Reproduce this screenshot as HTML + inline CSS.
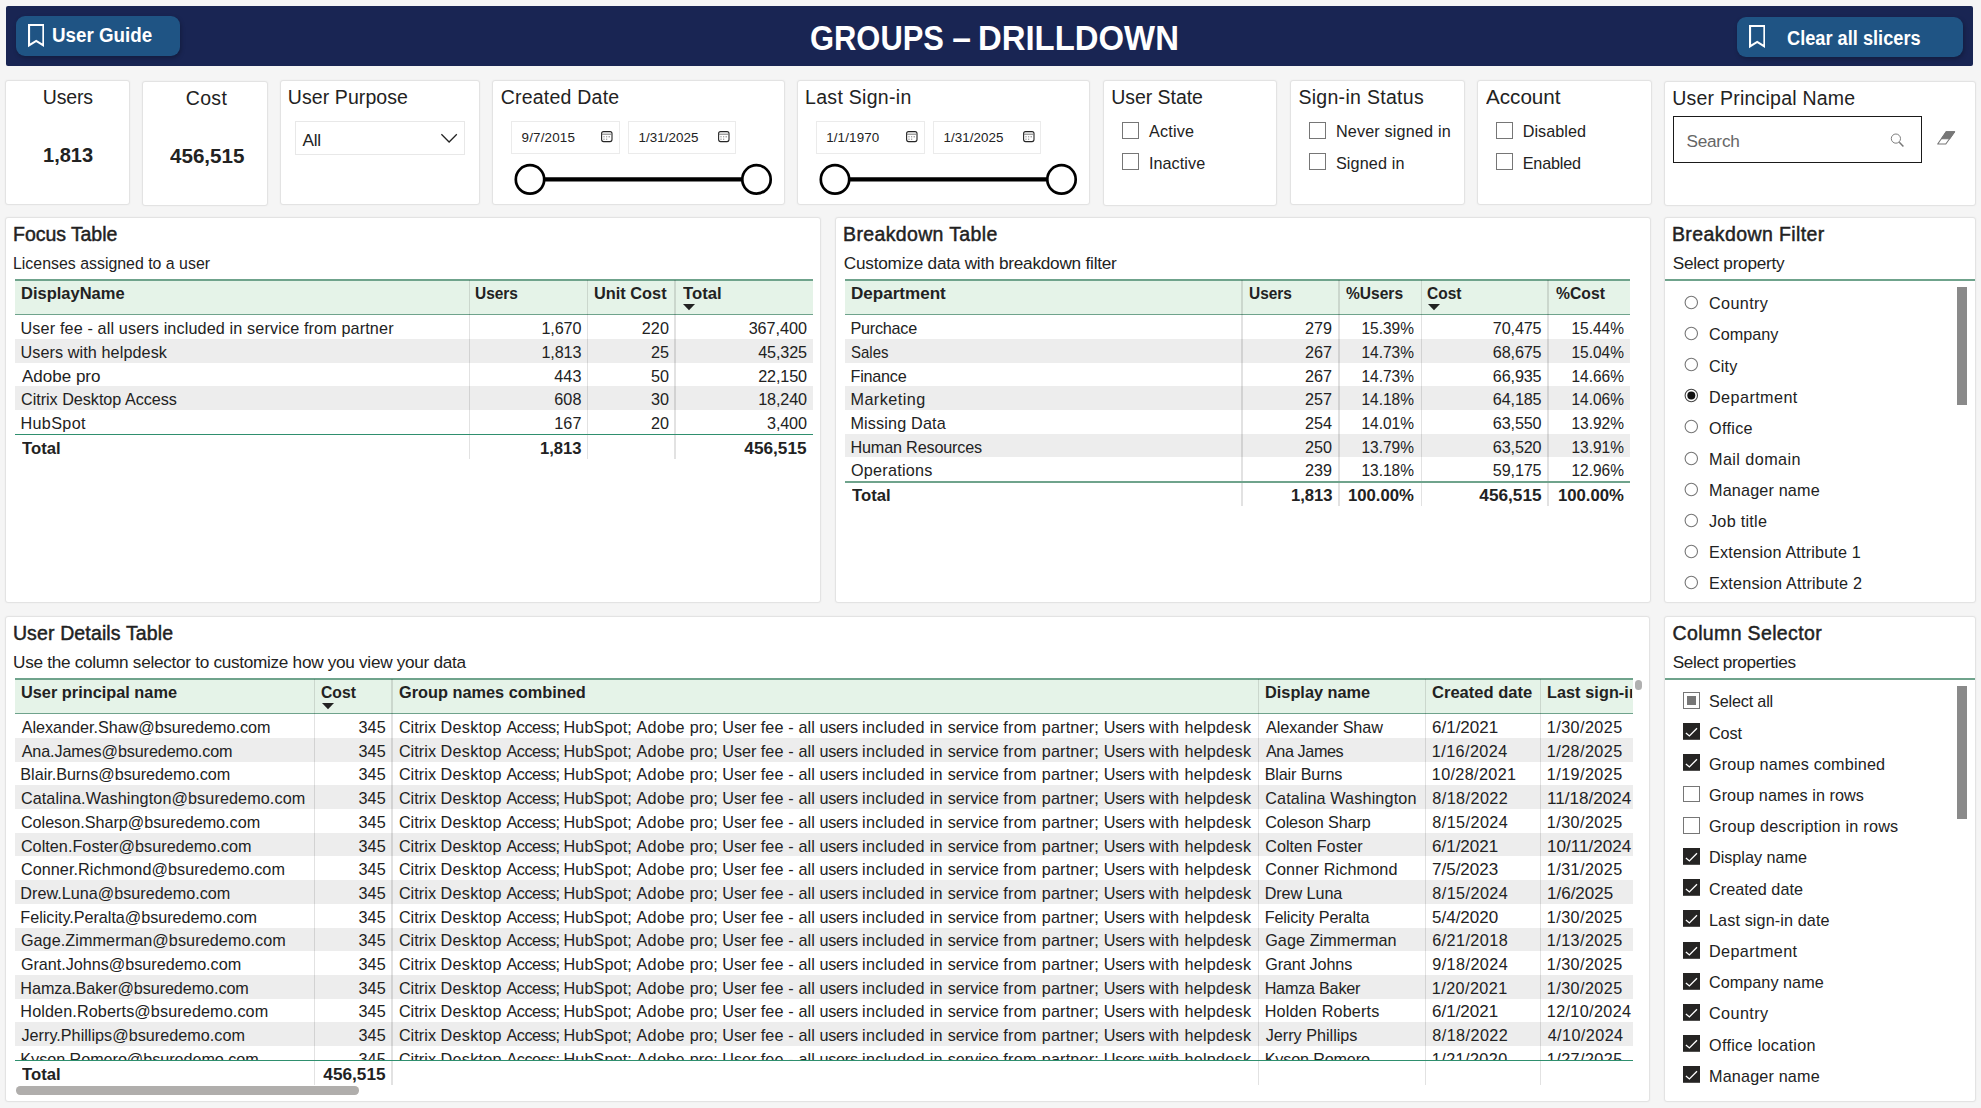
<!DOCTYPE html>
<html lang="en"><head><meta charset="utf-8"><title>Groups – Drilldown</title>
<style>
html,body{margin:0;padding:0}
body{width:1981px;height:1108px;overflow:hidden;background:#f5f5f5;position:relative;font-family:"Liberation Sans", Arial, sans-serif;color:#222}
body>div,body>svg{position:absolute;box-sizing:content-box}
body>span{position:absolute;white-space:pre;line-height:1;display:block}
div>div{position:absolute}
</style></head><body>
<div style="left:6px;top:6px;width:1967px;height:60px;background:#192553;border-radius:2px"></div>
<div style="left:16.3px;top:16px;width:164px;height:40px;background:#1f5484;border-radius:9px;box-shadow:1px 2px 4px rgba(0,0,0,.25)"></div>
<div style="left:1737px;top:17.3px;width:226.3px;height:39.5px;background:#1f5484;border-radius:9px;box-shadow:1px 2px 4px rgba(0,0,0,.25)"></div>
<svg style="left:27.8px;top:24.2px" width="16.5" height="24.5" viewBox="0 0 16.5 24.5"><path d="M1.05 1.05 H15.4 V21.4 L8.2 16.9 L1.05 21.4 Z" fill="none" stroke="#fff" stroke-width="2.1" stroke-linejoin="miter"/></svg>
<svg style="left:1748.9px;top:25.1px" width="16.5" height="24.5" viewBox="0 0 16.5 24.5"><path d="M1.05 1.05 H15.4 V21.4 L8.2 16.9 L1.05 21.4 Z" fill="none" stroke="#fff" stroke-width="2.1" stroke-linejoin="miter"/></svg>
<span style="left:51.87px;top:26px;font-size:19.5px;font-weight:700;transform-origin:0 0;transform:scaleX(0.9627);color:#fff;">User Guide</span>
<span style="left:1787.25px;top:29px;font-size:19.5px;font-weight:700;transform-origin:0 0;transform:scaleX(0.934);color:#fff;">Clear all slicers</span>
<span style="left:0;top:21px;font-size:35.4px;font-weight:700;color:#fff"><span style="position:absolute;left:809.9px;top:0;transform-origin:0 0;transform:scaleX(.8735)">GROUPS</span><span style="position:absolute;left:943.2px;top:0;transform-origin:0 0;transform:scaleX(.95)"> – </span><span style="position:absolute;left:977.9px;top:0;transform-origin:0 0;transform:scaleX(.929)">DRILLDOWN</span></span>
<div style="left:5px;top:80px;width:122.80000000000001px;height:122.5px;background:#fff;border:1px solid #e3e3e3;border-radius:3px;box-shadow:0 0 2px rgba(0,0,0,.05)"></div>
<div style="left:142px;top:81px;width:124px;height:123px;background:#fff;border:1px solid #e3e3e3;border-radius:3px;box-shadow:0 0 2px rgba(0,0,0,.05)"></div>
<div style="left:280px;top:80px;width:198px;height:123px;background:#fff;border:1px solid #e3e3e3;border-radius:3px;box-shadow:0 0 2px rgba(0,0,0,.05)"></div>
<div style="left:492px;top:80px;width:291px;height:123px;background:#fff;border:1px solid #e3e3e3;border-radius:3px;box-shadow:0 0 2px rgba(0,0,0,.05)"></div>
<div style="left:797px;top:80px;width:291px;height:123px;background:#fff;border:1px solid #e3e3e3;border-radius:3px;box-shadow:0 0 2px rgba(0,0,0,.05)"></div>
<div style="left:1103px;top:80px;width:172px;height:124px;background:#fff;border:1px solid #e3e3e3;border-radius:3px;box-shadow:0 0 2px rgba(0,0,0,.05)"></div>
<div style="left:1290px;top:80px;width:173px;height:123px;background:#fff;border:1px solid #e3e3e3;border-radius:3px;box-shadow:0 0 2px rgba(0,0,0,.05)"></div>
<div style="left:1477px;top:80px;width:173px;height:123px;background:#fff;border:1px solid #e3e3e3;border-radius:3px;box-shadow:0 0 2px rgba(0,0,0,.05)"></div>
<div style="left:1664px;top:81px;width:310px;height:123px;background:#fff;border:1px solid #e3e3e3;border-radius:3px;box-shadow:0 0 2px rgba(0,0,0,.05)"></div>
<span style="left:42.8px;top:88px;font-size:19.5px;letter-spacing:-0.188px;">Users</span>
<span style="left:43.04px;top:146px;font-size:19.5px;font-weight:700;transform-origin:0 0;transform:scaleX(1.0278);">1,813</span>
<span style="left:185.71px;top:89px;font-size:19.5px;letter-spacing:0.354px;">Cost</span>
<span style="left:169.69px;top:147px;font-size:19.5px;font-weight:700;transform-origin:0 0;transform:scaleX(1.0563);">456,515</span>
<span style="left:287.8px;top:88px;font-size:19.5px;letter-spacing:0.086px;">User Purpose</span>
<span style="left:500.71px;top:88px;font-size:19.5px;letter-spacing:0.226px;">Created Date</span>
<span style="left:805.1px;top:88px;font-size:19.5px;letter-spacing:0.29px;">Last Sign-in</span>
<span style="left:1111.2px;top:88px;font-size:19.5px;letter-spacing:-0.039px;">User State</span>
<span style="left:1298.41px;top:88px;font-size:19.5px;letter-spacing:0.297px;">Sign-in Status</span>
<span style="left:1485.96px;top:88px;font-size:19.5px;transform-origin:0 0;transform:scaleX(1.0582);">Account</span>
<span style="left:1672.2px;top:89px;font-size:19.5px;letter-spacing:0.231px;">User Principal Name</span>
<div style="left:294.5px;top:120.8px;width:168px;height:32px;border:1px solid #e8e8e8;background:#fff"></div>
<span style="left:302.57px;top:132px;font-size:17.2px;letter-spacing:-0.289px;">All</span>
<svg style="left:440px;top:133px" width="19" height="12" viewBox="0 0 19 12"><path d="M1.4 1.3 L9.1 9 L16.8 1.3" fill="none" stroke="#222" stroke-width="1.25"/></svg>
<div style="left:510.8px;top:121.3px;width:107px;height:30.6px;border:1px solid #ebebeb;background:#fff"></div>
<div style="left:628.2px;top:121.3px;width:105.5px;height:30.6px;border:1px solid #ebebeb;background:#fff"></div>
<span style="left:521.57px;top:131px;font-size:13.4px;letter-spacing:0.168px;">9/7/2015</span>
<span style="left:638.58px;top:131px;font-size:13.4px;letter-spacing:0.028px;">1/31/2025</span>
<svg style="left:600.8px;top:131px" width="12" height="12" viewBox="0 0 12 12"><rect x="0.6" y="0.6" width="10.4" height="10" rx="2" fill="none" stroke="#262626" stroke-width="1.1"/><path d="M0.8 3.2 H10.8" stroke="#777" stroke-width="1"/><path d="M2.5 5.8h1M5.2 5.8h1M7.6 5.8h1.2M2.5 8.2h1M5.2 8.2h1" stroke="#555" stroke-width="0.9"/></svg>
<svg style="left:717.5px;top:131px" width="12" height="12" viewBox="0 0 12 12"><rect x="0.6" y="0.6" width="10.4" height="10" rx="2" fill="none" stroke="#262626" stroke-width="1.1"/><path d="M0.8 3.2 H10.8" stroke="#777" stroke-width="1"/><path d="M2.5 5.8h1M5.2 5.8h1M7.6 5.8h1.2M2.5 8.2h1M5.2 8.2h1" stroke="#555" stroke-width="0.9"/></svg>
<svg style="left:511px;top:162px" width="266" height="36" viewBox="0 0 266 36"><path d="M19 17.4 H245.5" stroke="#000" stroke-width="4.3"/><circle cx="19" cy="17.4" r="14.2" fill="#fff" stroke="#000" stroke-width="2.7"/><circle cx="245.5" cy="17.4" r="14.2" fill="#fff" stroke="#000" stroke-width="2.7"/></svg>
<div style="left:815.8px;top:121.3px;width:107px;height:30.6px;border:1px solid #ebebeb;background:#fff"></div>
<div style="left:933.2px;top:121.3px;width:105.5px;height:30.6px;border:1px solid #ebebeb;background:#fff"></div>
<span style="left:826.18px;top:131px;font-size:13.4px;letter-spacing:0.14px;">1/1/1970</span>
<span style="left:943.58px;top:131px;font-size:13.4px;letter-spacing:0.028px;">1/31/2025</span>
<svg style="left:905.8px;top:131px" width="12" height="12" viewBox="0 0 12 12"><rect x="0.6" y="0.6" width="10.4" height="10" rx="2" fill="none" stroke="#262626" stroke-width="1.1"/><path d="M0.8 3.2 H10.8" stroke="#777" stroke-width="1"/><path d="M2.5 5.8h1M5.2 5.8h1M7.6 5.8h1.2M2.5 8.2h1M5.2 8.2h1" stroke="#555" stroke-width="0.9"/></svg>
<svg style="left:1022.5px;top:131px" width="12" height="12" viewBox="0 0 12 12"><rect x="0.6" y="0.6" width="10.4" height="10" rx="2" fill="none" stroke="#262626" stroke-width="1.1"/><path d="M0.8 3.2 H10.8" stroke="#777" stroke-width="1"/><path d="M2.5 5.8h1M5.2 5.8h1M7.6 5.8h1.2M2.5 8.2h1M5.2 8.2h1" stroke="#555" stroke-width="0.9"/></svg>
<svg style="left:816px;top:162px" width="266" height="36" viewBox="0 0 266 36"><path d="M19 17.4 H245.5" stroke="#000" stroke-width="4.3"/><circle cx="19" cy="17.4" r="14.2" fill="#fff" stroke="#000" stroke-width="2.7"/><circle cx="245.5" cy="17.4" r="14.2" fill="#fff" stroke="#000" stroke-width="2.7"/></svg>
<div style="left:1121.7px;top:122px;width:15.2px;height:15.2px;border:1px solid #767676;background:#fff"></div>
<span style="left:1148.9px;top:123px;font-size:16.2px;letter-spacing:0.216px;">Active</span>
<div style="left:1121.7px;top:153px;width:15.2px;height:15.2px;border:1px solid #767676;background:#fff"></div>
<span style="left:1148.9px;top:155px;font-size:16.2px;letter-spacing:0.068px;">Inactive</span>
<div style="left:1308.7px;top:122px;width:15.2px;height:15.2px;border:1px solid #767676;background:#fff"></div>
<span style="left:1335.9px;top:123px;font-size:16.2px;letter-spacing:0.163px;">Never signed in</span>
<div style="left:1308.7px;top:153px;width:15.2px;height:15.2px;border:1px solid #767676;background:#fff"></div>
<span style="left:1335.9px;top:155px;font-size:16.2px;letter-spacing:0.145px;">Signed in</span>
<div style="left:1495.5px;top:122px;width:15.2px;height:15.2px;border:1px solid #767676;background:#fff"></div>
<span style="left:1522.7px;top:123px;font-size:16.2px;letter-spacing:0.053px;">Disabled</span>
<div style="left:1495.5px;top:153px;width:15.2px;height:15.2px;border:1px solid #767676;background:#fff"></div>
<span style="left:1522.7px;top:155px;font-size:16.2px;letter-spacing:-0.175px;">Enabled</span>
<div style="left:1672.8px;top:116px;width:247px;height:45px;border:1.3px solid #1a1a1a;background:#fff"></div>
<span style="left:1686.42px;top:133px;font-size:17.2px;letter-spacing:-0.207px;color:#666;">Search</span>
<svg style="left:1889px;top:132px" width="17" height="17" viewBox="0 0 17 17"><circle cx="6.9" cy="6.6" r="4.6" fill="none" stroke="#767676" stroke-width="0.95"/><path d="M10.3 10.2 L14.4 14.4" stroke="#767676" stroke-width="1.5"/></svg>
<svg style="left:1936px;top:130px" width="21" height="16" viewBox="0 0 21 16"><path d="M10.2 1.8 H18.6 L9.8 14 H1.7 Z" fill="#fff" stroke="#777" stroke-width="1.1" stroke-linejoin="round"/><path d="M10.2 1.8 H18.6 L13.6 8.7 H5.6 Z" fill="#777" stroke="#777" stroke-width="1.1" stroke-linejoin="round"/></svg>
<div style="left:5px;top:217px;width:814.2px;height:383.79999999999995px;background:#fff;border:1px solid #e3e3e3;border-radius:3px;box-shadow:0 0 2px rgba(0,0,0,.05)"></div>
<span style="left:13.1px;top:225px;font-size:19.5px;letter-spacing:-0.063px;-webkit-text-stroke:0.45px #222;">Focus Table</span>
<span style="left:13.4px;top:255px;font-size:17.2px;transform-origin:0 0;transform:scaleX(0.9247);">Licenses assigned to a user</span>
<div style="left:15px;top:279px;width:798px;height:36px;background:#e5f3e8"></div>
<div style="left:15px;top:279px;width:798px;height:2px;background:#6fa38c"></div>
<div style="left:15px;top:314px;width:798px;height:1px;background:#6fa38c"></div>
<div style="left:15px;top:339.0px;width:798px;height:23.7px;background:#ededed"></div>
<div style="left:15px;top:386.4px;width:798px;height:23.7px;background:#ededed"></div>
<div style="left:468.65px;top:280px;width:1.3px;height:178.5px;background:rgba(0,0,0,.115)"></div>
<div style="left:586.75px;top:280px;width:1.3px;height:178.5px;background:rgba(0,0,0,.115)"></div>
<div style="left:674.35px;top:280px;width:1.3px;height:178.5px;background:rgba(0,0,0,.115)"></div>
<span style="left:20.7px;top:285px;font-size:16.2px;font-weight:700;transform-origin:0 0;transform:scaleX(1.0187);">DisplayName</span>
<span style="left:475.37px;top:285px;font-size:16.2px;font-weight:700;transform-origin:0 0;transform:scaleX(0.9549);">Users</span>
<span style="left:594.42px;top:285px;font-size:16.2px;font-weight:700;transform-origin:0 0;transform:scaleX(1.0088);">Unit Cost</span>
<span style="left:682.81px;top:285px;font-size:16.2px;font-weight:700;transform-origin:0 0;transform:scaleX(1.0321);">Total</span>
<svg style="left:683.0px;top:304px" width="12" height="7" viewBox="0 0 12 7"><path d="M0 0 H12 L6 6.3 Z" fill="#222"/></svg>
<span style="left:20.55px;top:320px;font-size:16.2px;letter-spacing:0.131px;">User fee - all users included in service from partner</span>
<span style="left:541.43px;top:320px;font-size:16.2px;letter-spacing:-0.136px;">1,670</span>
<span style="left:641.78px;top:320px;font-size:16.2px;letter-spacing:0.1px;">220</span>
<span style="left:748.63px;top:320px;font-size:16.2px;letter-spacing:-0.024px;">367,400</span>
<span style="left:20.55px;top:344px;font-size:16.2px;letter-spacing:0.084px;">Users with helpdesk</span>
<span style="left:541.43px;top:344px;font-size:16.2px;letter-spacing:-0.136px;">1,813</span>
<span style="left:650.88px;top:344px;font-size:16.2px;letter-spacing:0.1px;">25</span>
<span style="left:758.23px;top:344px;font-size:16.2px;letter-spacing:-0.149px;">45,325</span>
<span style="left:21.77px;top:368px;font-size:16.2px;transform-origin:0 0;transform:scaleX(1.0505);">Adobe pro</span>
<span style="left:554.18px;top:368px;font-size:16.2px;letter-spacing:0.1px;">443</span>
<span style="left:650.88px;top:368px;font-size:16.2px;letter-spacing:0.1px;">50</span>
<span style="left:758.23px;top:368px;font-size:16.2px;letter-spacing:-0.149px;">22,150</span>
<span style="left:20.98px;top:391px;font-size:16.2px;letter-spacing:-0.028px;">Citrix Desktop Access</span>
<span style="left:554.18px;top:391px;font-size:16.2px;letter-spacing:0.1px;">608</span>
<span style="left:650.88px;top:391px;font-size:16.2px;letter-spacing:0.1px;">30</span>
<span style="left:758.23px;top:391px;font-size:16.2px;letter-spacing:-0.149px;">18,240</span>
<span style="left:20.47px;top:415px;font-size:16.2px;letter-spacing:0.345px;">HubSpot</span>
<span style="left:554.18px;top:415px;font-size:16.2px;letter-spacing:0.1px;">167</span>
<span style="left:650.88px;top:415px;font-size:16.2px;letter-spacing:0.1px;">20</span>
<span style="left:767.03px;top:415px;font-size:16.2px;letter-spacing:-0.136px;">3,400</span>
<div style="left:15px;top:433.8px;width:798px;height:1.4px;background:#2f8f6e"></div>
<span style="left:21.61px;top:440px;font-size:16.2px;font-weight:700;transform-origin:0 0;transform:scaleX(1.0321);">Total</span>
<span style="left:540.88px;top:440px;font-size:16.2px;font-weight:700;transform-origin:100% 0;transform:scaleX(1.0261);">1,813</span>
<span style="left:748.48px;top:440px;font-size:16.2px;font-weight:700;transform-origin:100% 0;transform:scaleX(1.0625);">456,515</span>
<div style="left:835.3px;top:217px;width:814.0px;height:383.79999999999995px;background:#fff;border:1px solid #e3e3e3;border-radius:3px;box-shadow:0 0 2px rgba(0,0,0,.05)"></div>
<span style="left:843.1px;top:225px;font-size:19.5px;letter-spacing:0.351px;-webkit-text-stroke:0.45px #222;">Breakdown Table</span>
<span style="left:843.83px;top:255px;font-size:17.2px;letter-spacing:-0.224px;">Customize data with breakdown filter</span>
<div style="left:845px;top:279px;width:785px;height:36px;background:#e5f3e8"></div>
<div style="left:845px;top:279px;width:785px;height:2px;background:#6fa38c"></div>
<div style="left:845px;top:314px;width:785px;height:1px;background:#6fa38c"></div>
<div style="left:845px;top:339.0px;width:785px;height:23.7px;background:#ededed"></div>
<div style="left:845px;top:386.4px;width:785px;height:23.7px;background:#ededed"></div>
<div style="left:845px;top:433.8px;width:785px;height:23.7px;background:#ededed"></div>
<div style="left:1241.35px;top:280px;width:1.3px;height:225.9px;background:rgba(0,0,0,.115)"></div>
<div style="left:1338.35px;top:280px;width:1.3px;height:225.9px;background:rgba(0,0,0,.115)"></div>
<div style="left:1420.55px;top:280px;width:1.3px;height:225.9px;background:rgba(0,0,0,.115)"></div>
<div style="left:1547.45px;top:280px;width:1.3px;height:225.9px;background:rgba(0,0,0,.115)"></div>
<span style="left:850.66px;top:285px;font-size:16.2px;font-weight:700;transform-origin:0 0;transform:scaleX(1.0536);">Department</span>
<span style="left:1249.07px;top:285px;font-size:16.2px;font-weight:700;transform-origin:0 0;transform:scaleX(0.9549);">Users</span>
<span style="left:1345.51px;top:285px;font-size:16.2px;font-weight:700;transform-origin:0 0;transform:scaleX(0.9607);">%Users</span>
<span style="left:1427.36px;top:285px;font-size:16.2px;font-weight:700;transform-origin:0 0;transform:scaleX(0.958);">Cost</span>
<span style="left:1555.61px;top:285px;font-size:16.2px;font-weight:700;transform-origin:0 0;transform:scaleX(0.9702);">%Cost</span>
<svg style="left:1428.0px;top:304px" width="12" height="7" viewBox="0 0 12 7"><path d="M0 0 H12 L6 6.3 Z" fill="#222"/></svg>
<span style="left:850.47px;top:320px;font-size:16.2px;letter-spacing:-0.231px;">Purchace</span>
<span style="left:1304.88px;top:320px;font-size:16.2px;letter-spacing:0.1px;">279</span>
<span style="left:1359.39px;top:320px;font-size:16.2px;transform-origin:100% 0;transform:scaleX(0.9557);">15.39%</span>
<span style="left:1492.83px;top:320px;font-size:16.2px;letter-spacing:-0.149px;">70,475</span>
<span style="left:1569.09px;top:320px;font-size:16.2px;transform-origin:100% 0;transform:scaleX(0.9557);">15.44%</span>
<span style="left:851.12px;top:344px;font-size:16.2px;transform-origin:0 0;transform:scaleX(0.9252);">Sales</span>
<span style="left:1304.88px;top:344px;font-size:16.2px;letter-spacing:0.1px;">267</span>
<span style="left:1359.39px;top:344px;font-size:16.2px;transform-origin:100% 0;transform:scaleX(0.9557);">14.73%</span>
<span style="left:1492.83px;top:344px;font-size:16.2px;letter-spacing:-0.149px;">68,675</span>
<span style="left:1569.09px;top:344px;font-size:16.2px;transform-origin:100% 0;transform:scaleX(0.9557);">15.04%</span>
<span style="left:850.47px;top:368px;font-size:16.2px;letter-spacing:-0.22px;">Finance</span>
<span style="left:1304.88px;top:368px;font-size:16.2px;letter-spacing:0.1px;">267</span>
<span style="left:1359.39px;top:368px;font-size:16.2px;transform-origin:100% 0;transform:scaleX(0.9557);">14.73%</span>
<span style="left:1492.83px;top:368px;font-size:16.2px;letter-spacing:-0.149px;">66,935</span>
<span style="left:1569.09px;top:368px;font-size:16.2px;transform-origin:100% 0;transform:scaleX(0.9557);">14.66%</span>
<span style="left:850.47px;top:391px;font-size:16.2px;letter-spacing:0.449px;">Marketing</span>
<span style="left:1304.88px;top:391px;font-size:16.2px;letter-spacing:0.1px;">257</span>
<span style="left:1359.39px;top:391px;font-size:16.2px;transform-origin:100% 0;transform:scaleX(0.9557);">14.18%</span>
<span style="left:1492.83px;top:391px;font-size:16.2px;letter-spacing:-0.149px;">64,185</span>
<span style="left:1569.09px;top:391px;font-size:16.2px;transform-origin:100% 0;transform:scaleX(0.9557);">14.06%</span>
<span style="left:850.47px;top:415px;font-size:16.2px;letter-spacing:0.155px;">Missing Data</span>
<span style="left:1304.88px;top:415px;font-size:16.2px;letter-spacing:0.1px;">254</span>
<span style="left:1359.39px;top:415px;font-size:16.2px;transform-origin:100% 0;transform:scaleX(0.9557);">14.01%</span>
<span style="left:1492.83px;top:415px;font-size:16.2px;letter-spacing:-0.149px;">63,550</span>
<span style="left:1569.09px;top:415px;font-size:16.2px;transform-origin:100% 0;transform:scaleX(0.9557);">13.92%</span>
<span style="left:850.47px;top:439px;font-size:16.2px;letter-spacing:-0.171px;">Human Resources</span>
<span style="left:1304.88px;top:439px;font-size:16.2px;letter-spacing:0.1px;">250</span>
<span style="left:1359.39px;top:439px;font-size:16.2px;transform-origin:100% 0;transform:scaleX(0.9557);">13.79%</span>
<span style="left:1492.83px;top:439px;font-size:16.2px;letter-spacing:-0.149px;">63,520</span>
<span style="left:1569.09px;top:439px;font-size:16.2px;transform-origin:100% 0;transform:scaleX(0.9557);">13.91%</span>
<span style="left:851.03px;top:462px;font-size:16.2px;letter-spacing:0.243px;">Operations</span>
<span style="left:1304.88px;top:462px;font-size:16.2px;letter-spacing:0.1px;">239</span>
<span style="left:1359.39px;top:462px;font-size:16.2px;transform-origin:100% 0;transform:scaleX(0.9557);">13.18%</span>
<span style="left:1492.83px;top:462px;font-size:16.2px;letter-spacing:-0.149px;">59,175</span>
<span style="left:1569.09px;top:462px;font-size:16.2px;transform-origin:100% 0;transform:scaleX(0.9557);">12.96%</span>
<div style="left:845px;top:481.20000000000005px;width:785px;height:2px;background:#6fa38c"></div>
<span style="left:851.61px;top:487px;font-size:16.2px;font-weight:700;transform-origin:0 0;transform:scaleX(1.0321);">Total</span>
<span style="left:1291.58px;top:487px;font-size:16.2px;font-weight:700;transform-origin:100% 0;transform:scaleX(1.0261);">1,813</span>
<span style="left:1350.39px;top:487px;font-size:16.2px;font-weight:700;transform-origin:100% 0;transform:scaleX(1.0323);">100.00%</span>
<span style="left:1483.08px;top:487px;font-size:16.2px;font-weight:700;transform-origin:100% 0;transform:scaleX(1.0625);">456,515</span>
<span style="left:1560.09px;top:487px;font-size:16.2px;font-weight:700;transform-origin:100% 0;transform:scaleX(1.0323);">100.00%</span>
<div style="left:1664px;top:217px;width:310px;height:383.79999999999995px;background:#fff;border:1px solid #e3e3e3;border-radius:3px;box-shadow:0 0 2px rgba(0,0,0,.05)"></div>
<span style="left:1671.9px;top:225px;font-size:19.5px;letter-spacing:0.41px;-webkit-text-stroke:0.45px #222;">Breakdown Filter</span>
<span style="left:1672.72px;top:255px;font-size:17.2px;letter-spacing:-0.27px;">Select property</span>
<div style="left:1665px;top:279px;width:310px;height:2px;background:#6fa38c"></div>
<div style="left:1957.3px;top:287px;width:9.7px;height:118px;background:#8a8a8a"></div>
<svg style="left:1684px;top:295.1px" width="15" height="15" viewBox="0 0 15 15"><circle cx="7.3" cy="7.5" r="6.2" fill="#fff" stroke="#777" stroke-width="1.1"/></svg>
<span style="left:1709px;top:295px;font-size:16.2px;letter-spacing:0.381px;">Country</span>
<svg style="left:1684px;top:326.18px" width="15" height="15" viewBox="0 0 15 15"><circle cx="7.3" cy="7.5" r="6.2" fill="#fff" stroke="#777" stroke-width="1.1"/></svg>
<span style="left:1709px;top:326px;font-size:16.2px;letter-spacing:0.015px;">Company</span>
<svg style="left:1684px;top:357.26px" width="15" height="15" viewBox="0 0 15 15"><circle cx="7.3" cy="7.5" r="6.2" fill="#fff" stroke="#777" stroke-width="1.1"/></svg>
<span style="left:1709px;top:358px;font-size:16.2px;letter-spacing:0.127px;">City</span>
<svg style="left:1684px;top:388.34000000000003px" width="15" height="15" viewBox="0 0 15 15"><circle cx="7.3" cy="7.5" r="6.2" fill="#fff" stroke="#444" stroke-width="1.1"/><circle cx="7.3" cy="7.5" r="4" fill="#111"/></svg>
<span style="left:1709px;top:389px;font-size:16.2px;letter-spacing:0.422px;">Department</span>
<svg style="left:1684px;top:419.42px" width="15" height="15" viewBox="0 0 15 15"><circle cx="7.3" cy="7.5" r="6.2" fill="#fff" stroke="#777" stroke-width="1.1"/></svg>
<span style="left:1709px;top:420px;font-size:16.2px;letter-spacing:0.314px;">Office</span>
<svg style="left:1684px;top:450.5px" width="15" height="15" viewBox="0 0 15 15"><circle cx="7.3" cy="7.5" r="6.2" fill="#fff" stroke="#777" stroke-width="1.1"/></svg>
<span style="left:1709px;top:451px;font-size:16.2px;letter-spacing:0.429px;">Mail domain</span>
<svg style="left:1684px;top:481.58000000000004px" width="15" height="15" viewBox="0 0 15 15"><circle cx="7.3" cy="7.5" r="6.2" fill="#fff" stroke="#777" stroke-width="1.1"/></svg>
<span style="left:1709px;top:482px;font-size:16.2px;letter-spacing:0.162px;">Manager name</span>
<svg style="left:1684px;top:512.6600000000001px" width="15" height="15" viewBox="0 0 15 15"><circle cx="7.3" cy="7.5" r="6.2" fill="#fff" stroke="#777" stroke-width="1.1"/></svg>
<span style="left:1709px;top:513px;font-size:16.2px;letter-spacing:0.272px;">Job title</span>
<svg style="left:1684px;top:543.74px" width="15" height="15" viewBox="0 0 15 15"><circle cx="7.3" cy="7.5" r="6.2" fill="#fff" stroke="#777" stroke-width="1.1"/></svg>
<span style="left:1709px;top:544px;font-size:16.2px;letter-spacing:0.169px;">Extension Attribute 1</span>
<svg style="left:1684px;top:574.8199999999999px" width="15" height="15" viewBox="0 0 15 15"><circle cx="7.3" cy="7.5" r="6.2" fill="#fff" stroke="#777" stroke-width="1.1"/></svg>
<span style="left:1709px;top:575px;font-size:16.2px;letter-spacing:0.224px;">Extension Attribute 2</span>
<div style="left:5px;top:616.2px;width:1643px;height:483.79999999999995px;background:#fff;border:1px solid #e3e3e3;border-radius:3px;box-shadow:0 0 2px rgba(0,0,0,.05)"></div>
<span style="left:12.9px;top:624px;font-size:19.5px;letter-spacing:0.134px;-webkit-text-stroke:0.45px #222;">User Details Table</span>
<span style="left:13.07px;top:654px;font-size:17.2px;letter-spacing:-0.293px;">Use the column selector to customize how you view your data</span>
<div style="left:15px;top:678px;width:1618px;height:36px;background:#e5f3e8"></div>
<div style="left:15px;top:678px;width:1618px;height:2px;background:#6fa38c"></div>
<div style="left:15px;top:713px;width:1618px;height:1px;background:#6fa38c"></div>
<div style="left:15px;top:738.0px;width:1618px;height:23.7px;background:#ededed"></div>
<div style="left:15px;top:785.4px;width:1618px;height:23.7px;background:#ededed"></div>
<div style="left:15px;top:832.8px;width:1618px;height:23.7px;background:#ededed"></div>
<div style="left:15px;top:880.2px;width:1618px;height:23.7px;background:#ededed"></div>
<div style="left:15px;top:927.6px;width:1618px;height:23.7px;background:#ededed"></div>
<div style="left:15px;top:975.0px;width:1618px;height:23.7px;background:#ededed"></div>
<div style="left:15px;top:1022.4px;width:1618px;height:23.7px;background:#ededed"></div>
<div style="left:313.95px;top:679px;width:1.3px;height:381px;background:rgba(0,0,0,.115)"></div>
<div style="left:391.35px;top:679px;width:1.3px;height:381px;background:rgba(0,0,0,.115)"></div>
<div style="left:1257.65px;top:679px;width:1.3px;height:381px;background:rgba(0,0,0,.115)"></div>
<div style="left:1424.65px;top:679px;width:1.3px;height:381px;background:rgba(0,0,0,.115)"></div>
<div style="left:1539.75px;top:679px;width:1.3px;height:381px;background:rgba(0,0,0,.115)"></div>
<span style="left:20.72px;top:684px;font-size:16.2px;font-weight:700;transform-origin:0 0;transform:scaleX(1.0079);">User principal name</span>
<span style="left:321.36px;top:684px;font-size:16.2px;font-weight:700;transform-origin:0 0;transform:scaleX(0.9691);">Cost</span>
<span style="left:398.73px;top:684px;font-size:16.2px;font-weight:700;transform-origin:0 0;transform:scaleX(1.0074);">Group names combined</span>
<span style="left:1264.91px;top:684px;font-size:16.2px;font-weight:700;transform-origin:0 0;transform:scaleX(1.0076);">Display name</span>
<span style="left:1432.32px;top:684px;font-size:16.2px;font-weight:700;transform-origin:0 0;transform:scaleX(1.0225);">Created date</span>
<span style="left:1546.92px;top:684px;font-size:16.2px;font-weight:700;letter-spacing:0.1px;width:85.0px;overflow:hidden;padding-bottom:5px;">Last sign-in date</span>
<svg style="left:322.0px;top:703px" width="12" height="7" viewBox="0 0 12 7"><path d="M0 0 H12 L6 6.3 Z" fill="#222"/></svg>
<span style="left:21.67px;top:719px;font-size:16.2px;letter-spacing:-0.026px;">Alexander.Shaw@bsuredemo.com</span>
<span style="left:358.48px;top:719px;font-size:16.2px;letter-spacing:0.1px;">345</span>
<span style="left:398.88px;top:719px;font-size:16.2px;"><span style="letter-spacing:0.046px">Citrix </span><span style="letter-spacing:0.263px">Desktop </span><span style="letter-spacing:-0.534px">Access; </span><span style="letter-spacing:0.111px">HubSpot; </span><span style="letter-spacing:0.312px">Adobe </span><span style="letter-spacing:0.058px">pro; </span><span style="letter-spacing:-0.073px">User </span><span style="letter-spacing:0.173px">fee </span><span style="letter-spacing:0.071px">- </span><span style="letter-spacing:0.108px">all </span><span style="letter-spacing:-0.271px">users </span><span style="letter-spacing:0.321px">included </span><span style="letter-spacing:0.341px">in </span><span style="letter-spacing:-0.045px">service </span><span style="letter-spacing:0.322px">from </span><span style="letter-spacing:0.189px">partner; </span><span style="letter-spacing:-0.268px">Users </span><span style="letter-spacing:0.471px">with </span><span style="letter-spacing:0.241px">helpdesk</span></span>
<span style="left:1265.97px;top:719px;font-size:16.2px;letter-spacing:-0.071px;">Alexander Shaw</span>
<span style="left:1432.14px;top:719px;font-size:16.2px;transform-origin:0 0;transform:scaleX(1.0501);">6/1/2021</span>
<span style="left:1546.77px;top:719px;font-size:16.2px;letter-spacing:0.432px;">1/30/2025</span>
<span style="left:21.67px;top:743px;font-size:16.2px;letter-spacing:-0.119px;">Ana.James@bsuredemo.com</span>
<span style="left:358.48px;top:743px;font-size:16.2px;letter-spacing:0.1px;">345</span>
<span style="left:398.88px;top:743px;font-size:16.2px;"><span style="letter-spacing:0.046px">Citrix </span><span style="letter-spacing:0.263px">Desktop </span><span style="letter-spacing:-0.534px">Access; </span><span style="letter-spacing:0.111px">HubSpot; </span><span style="letter-spacing:0.312px">Adobe </span><span style="letter-spacing:0.058px">pro; </span><span style="letter-spacing:-0.073px">User </span><span style="letter-spacing:0.173px">fee </span><span style="letter-spacing:0.071px">- </span><span style="letter-spacing:0.108px">all </span><span style="letter-spacing:-0.271px">users </span><span style="letter-spacing:0.321px">included </span><span style="letter-spacing:0.341px">in </span><span style="letter-spacing:-0.045px">service </span><span style="letter-spacing:0.322px">from </span><span style="letter-spacing:0.189px">partner; </span><span style="letter-spacing:-0.268px">Users </span><span style="letter-spacing:0.471px">with </span><span style="letter-spacing:0.241px">helpdesk</span></span>
<span style="left:1265.97px;top:743px;font-size:16.2px;letter-spacing:-0.414px;">Ana James</span>
<span style="left:1431.77px;top:743px;font-size:16.2px;letter-spacing:0.432px;">1/16/2024</span>
<span style="left:1546.77px;top:743px;font-size:16.2px;letter-spacing:0.432px;">1/28/2025</span>
<span style="left:20.37px;top:766px;font-size:16.2px;letter-spacing:-0.034px;">Blair.Burns@bsuredemo.com</span>
<span style="left:358.48px;top:766px;font-size:16.2px;letter-spacing:0.1px;">345</span>
<span style="left:398.88px;top:766px;font-size:16.2px;"><span style="letter-spacing:0.046px">Citrix </span><span style="letter-spacing:0.263px">Desktop </span><span style="letter-spacing:-0.534px">Access; </span><span style="letter-spacing:0.111px">HubSpot; </span><span style="letter-spacing:0.312px">Adobe </span><span style="letter-spacing:0.058px">pro; </span><span style="letter-spacing:-0.073px">User </span><span style="letter-spacing:0.173px">fee </span><span style="letter-spacing:0.071px">- </span><span style="letter-spacing:0.108px">all </span><span style="letter-spacing:-0.271px">users </span><span style="letter-spacing:0.321px">included </span><span style="letter-spacing:0.341px">in </span><span style="letter-spacing:-0.045px">service </span><span style="letter-spacing:0.322px">from </span><span style="letter-spacing:0.189px">partner; </span><span style="letter-spacing:-0.268px">Users </span><span style="letter-spacing:0.471px">with </span><span style="letter-spacing:0.241px">helpdesk</span></span>
<span style="left:1264.67px;top:766px;font-size:16.2px;letter-spacing:-0.15px;">Blair Burns</span>
<span style="left:1431.77px;top:766px;font-size:16.2px;letter-spacing:0.36px;">10/28/2021</span>
<span style="left:1546.77px;top:766px;font-size:16.2px;letter-spacing:0.432px;">1/19/2025</span>
<span style="left:20.88px;top:790px;font-size:16.2px;letter-spacing:0.097px;">Catalina.Washington@bsuredemo.com</span>
<span style="left:358.48px;top:790px;font-size:16.2px;letter-spacing:0.1px;">345</span>
<span style="left:398.88px;top:790px;font-size:16.2px;"><span style="letter-spacing:0.046px">Citrix </span><span style="letter-spacing:0.263px">Desktop </span><span style="letter-spacing:-0.534px">Access; </span><span style="letter-spacing:0.111px">HubSpot; </span><span style="letter-spacing:0.312px">Adobe </span><span style="letter-spacing:0.058px">pro; </span><span style="letter-spacing:-0.073px">User </span><span style="letter-spacing:0.173px">fee </span><span style="letter-spacing:0.071px">- </span><span style="letter-spacing:0.108px">all </span><span style="letter-spacing:-0.271px">users </span><span style="letter-spacing:0.321px">included </span><span style="letter-spacing:0.341px">in </span><span style="letter-spacing:-0.045px">service </span><span style="letter-spacing:0.322px">from </span><span style="letter-spacing:0.189px">partner; </span><span style="letter-spacing:-0.268px">Users </span><span style="letter-spacing:0.471px">with </span><span style="letter-spacing:0.241px">helpdesk</span></span>
<span style="left:1265.18px;top:790px;font-size:16.2px;letter-spacing:0.138px;">Catalina Washington</span>
<span style="left:1432.3px;top:790px;font-size:16.2px;letter-spacing:0.432px;">8/18/2022</span>
<span style="left:1546.7px;top:790px;font-size:16.2px;transform-origin:0 0;transform:scaleX(1.0557);">11/18/2024</span>
<span style="left:20.88px;top:814px;font-size:16.2px;letter-spacing:-0.012px;">Coleson.Sharp@bsuredemo.com</span>
<span style="left:358.48px;top:814px;font-size:16.2px;letter-spacing:0.1px;">345</span>
<span style="left:398.88px;top:814px;font-size:16.2px;"><span style="letter-spacing:0.046px">Citrix </span><span style="letter-spacing:0.263px">Desktop </span><span style="letter-spacing:-0.534px">Access; </span><span style="letter-spacing:0.111px">HubSpot; </span><span style="letter-spacing:0.312px">Adobe </span><span style="letter-spacing:0.058px">pro; </span><span style="letter-spacing:-0.073px">User </span><span style="letter-spacing:0.173px">fee </span><span style="letter-spacing:0.071px">- </span><span style="letter-spacing:0.108px">all </span><span style="letter-spacing:-0.271px">users </span><span style="letter-spacing:0.321px">included </span><span style="letter-spacing:0.341px">in </span><span style="letter-spacing:-0.045px">service </span><span style="letter-spacing:0.322px">from </span><span style="letter-spacing:0.189px">partner; </span><span style="letter-spacing:-0.268px">Users </span><span style="letter-spacing:0.471px">with </span><span style="letter-spacing:0.241px">helpdesk</span></span>
<span style="left:1265.18px;top:814px;font-size:16.2px;letter-spacing:-0.118px;">Coleson Sharp</span>
<span style="left:1432.3px;top:814px;font-size:16.2px;letter-spacing:0.432px;">8/15/2024</span>
<span style="left:1546.77px;top:814px;font-size:16.2px;letter-spacing:0.432px;">1/30/2025</span>
<span style="left:20.88px;top:838px;font-size:16.2px;letter-spacing:0.038px;">Colten.Foster@bsuredemo.com</span>
<span style="left:358.48px;top:838px;font-size:16.2px;letter-spacing:0.1px;">345</span>
<span style="left:398.88px;top:838px;font-size:16.2px;"><span style="letter-spacing:0.046px">Citrix </span><span style="letter-spacing:0.263px">Desktop </span><span style="letter-spacing:-0.534px">Access; </span><span style="letter-spacing:0.111px">HubSpot; </span><span style="letter-spacing:0.312px">Adobe </span><span style="letter-spacing:0.058px">pro; </span><span style="letter-spacing:-0.073px">User </span><span style="letter-spacing:0.173px">fee </span><span style="letter-spacing:0.071px">- </span><span style="letter-spacing:0.108px">all </span><span style="letter-spacing:-0.271px">users </span><span style="letter-spacing:0.321px">included </span><span style="letter-spacing:0.341px">in </span><span style="letter-spacing:-0.045px">service </span><span style="letter-spacing:0.322px">from </span><span style="letter-spacing:0.189px">partner; </span><span style="letter-spacing:-0.268px">Users </span><span style="letter-spacing:0.471px">with </span><span style="letter-spacing:0.241px">helpdesk</span></span>
<span style="left:1265.18px;top:838px;font-size:16.2px;letter-spacing:0.033px;">Colten Foster</span>
<span style="left:1432.14px;top:838px;font-size:16.2px;transform-origin:0 0;transform:scaleX(1.0501);">6/1/2021</span>
<span style="left:1546.7px;top:838px;font-size:16.2px;transform-origin:0 0;transform:scaleX(1.0557);">10/11/2024</span>
<span style="left:20.88px;top:861px;font-size:16.2px;letter-spacing:0.071px;">Conner.Richmond@bsuredemo.com</span>
<span style="left:358.48px;top:861px;font-size:16.2px;letter-spacing:0.1px;">345</span>
<span style="left:398.88px;top:861px;font-size:16.2px;"><span style="letter-spacing:0.046px">Citrix </span><span style="letter-spacing:0.263px">Desktop </span><span style="letter-spacing:-0.534px">Access; </span><span style="letter-spacing:0.111px">HubSpot; </span><span style="letter-spacing:0.312px">Adobe </span><span style="letter-spacing:0.058px">pro; </span><span style="letter-spacing:-0.073px">User </span><span style="letter-spacing:0.173px">fee </span><span style="letter-spacing:0.071px">- </span><span style="letter-spacing:0.108px">all </span><span style="letter-spacing:-0.271px">users </span><span style="letter-spacing:0.321px">included </span><span style="letter-spacing:0.341px">in </span><span style="letter-spacing:-0.045px">service </span><span style="letter-spacing:0.322px">from </span><span style="letter-spacing:0.189px">partner; </span><span style="letter-spacing:-0.268px">Users </span><span style="letter-spacing:0.471px">with </span><span style="letter-spacing:0.241px">helpdesk</span></span>
<span style="left:1265.18px;top:861px;font-size:16.2px;letter-spacing:0.129px;">Conner Richmond</span>
<span style="left:1432.13px;top:861px;font-size:16.2px;transform-origin:0 0;transform:scaleX(1.0501);">7/5/2023</span>
<span style="left:1546.77px;top:861px;font-size:16.2px;letter-spacing:0.432px;">1/31/2025</span>
<span style="left:20.37px;top:885px;font-size:16.2px;letter-spacing:0.004px;">Drew.Luna@bsuredemo.com</span>
<span style="left:358.48px;top:885px;font-size:16.2px;letter-spacing:0.1px;">345</span>
<span style="left:398.88px;top:885px;font-size:16.2px;"><span style="letter-spacing:0.046px">Citrix </span><span style="letter-spacing:0.263px">Desktop </span><span style="letter-spacing:-0.534px">Access; </span><span style="letter-spacing:0.111px">HubSpot; </span><span style="letter-spacing:0.312px">Adobe </span><span style="letter-spacing:0.058px">pro; </span><span style="letter-spacing:-0.073px">User </span><span style="letter-spacing:0.173px">fee </span><span style="letter-spacing:0.071px">- </span><span style="letter-spacing:0.108px">all </span><span style="letter-spacing:-0.271px">users </span><span style="letter-spacing:0.321px">included </span><span style="letter-spacing:0.341px">in </span><span style="letter-spacing:-0.045px">service </span><span style="letter-spacing:0.322px">from </span><span style="letter-spacing:0.189px">partner; </span><span style="letter-spacing:-0.268px">Users </span><span style="letter-spacing:0.471px">with </span><span style="letter-spacing:0.241px">helpdesk</span></span>
<span style="left:1264.67px;top:885px;font-size:16.2px;letter-spacing:-0.078px;">Drew Luna</span>
<span style="left:1432.3px;top:885px;font-size:16.2px;letter-spacing:0.432px;">8/15/2024</span>
<span style="left:1546.7px;top:885px;font-size:16.2px;transform-origin:0 0;transform:scaleX(1.0501);">1/6/2025</span>
<span style="left:20.37px;top:909px;font-size:16.2px;letter-spacing:-0.03px;">Felicity.Peralta@bsuredemo.com</span>
<span style="left:358.48px;top:909px;font-size:16.2px;letter-spacing:0.1px;">345</span>
<span style="left:398.88px;top:909px;font-size:16.2px;"><span style="letter-spacing:0.046px">Citrix </span><span style="letter-spacing:0.263px">Desktop </span><span style="letter-spacing:-0.534px">Access; </span><span style="letter-spacing:0.111px">HubSpot; </span><span style="letter-spacing:0.312px">Adobe </span><span style="letter-spacing:0.058px">pro; </span><span style="letter-spacing:-0.073px">User </span><span style="letter-spacing:0.173px">fee </span><span style="letter-spacing:0.071px">- </span><span style="letter-spacing:0.108px">all </span><span style="letter-spacing:-0.271px">users </span><span style="letter-spacing:0.321px">included </span><span style="letter-spacing:0.341px">in </span><span style="letter-spacing:-0.045px">service </span><span style="letter-spacing:0.322px">from </span><span style="letter-spacing:0.189px">partner; </span><span style="letter-spacing:-0.268px">Users </span><span style="letter-spacing:0.471px">with </span><span style="letter-spacing:0.241px">helpdesk</span></span>
<span style="left:1264.67px;top:909px;font-size:16.2px;letter-spacing:-0.092px;">Felicity Peralta</span>
<span style="left:1432.32px;top:909px;font-size:16.2px;transform-origin:0 0;transform:scaleX(1.0501);">5/4/2020</span>
<span style="left:1546.77px;top:909px;font-size:16.2px;letter-spacing:0.432px;">1/30/2025</span>
<span style="left:20.89px;top:932px;font-size:16.2px;letter-spacing:0.075px;">Gage.Zimmerman@bsuredemo.com</span>
<span style="left:358.48px;top:932px;font-size:16.2px;letter-spacing:0.1px;">345</span>
<span style="left:398.88px;top:932px;font-size:16.2px;"><span style="letter-spacing:0.046px">Citrix </span><span style="letter-spacing:0.263px">Desktop </span><span style="letter-spacing:-0.534px">Access; </span><span style="letter-spacing:0.111px">HubSpot; </span><span style="letter-spacing:0.312px">Adobe </span><span style="letter-spacing:0.058px">pro; </span><span style="letter-spacing:-0.073px">User </span><span style="letter-spacing:0.173px">fee </span><span style="letter-spacing:0.071px">- </span><span style="letter-spacing:0.108px">all </span><span style="letter-spacing:-0.271px">users </span><span style="letter-spacing:0.321px">included </span><span style="letter-spacing:0.341px">in </span><span style="letter-spacing:-0.045px">service </span><span style="letter-spacing:0.322px">from </span><span style="letter-spacing:0.189px">partner; </span><span style="letter-spacing:-0.268px">Users </span><span style="letter-spacing:0.471px">with </span><span style="letter-spacing:0.241px">helpdesk</span></span>
<span style="left:1265.19px;top:932px;font-size:16.2px;letter-spacing:0.072px;">Gage Zimmerman</span>
<span style="left:1432.18px;top:932px;font-size:16.2px;letter-spacing:0.432px;">6/21/2018</span>
<span style="left:1546.77px;top:932px;font-size:16.2px;letter-spacing:0.432px;">1/13/2025</span>
<span style="left:20.89px;top:956px;font-size:16.2px;letter-spacing:-0.017px;">Grant.Johns@bsuredemo.com</span>
<span style="left:358.48px;top:956px;font-size:16.2px;letter-spacing:0.1px;">345</span>
<span style="left:398.88px;top:956px;font-size:16.2px;"><span style="letter-spacing:0.046px">Citrix </span><span style="letter-spacing:0.263px">Desktop </span><span style="letter-spacing:-0.534px">Access; </span><span style="letter-spacing:0.111px">HubSpot; </span><span style="letter-spacing:0.312px">Adobe </span><span style="letter-spacing:0.058px">pro; </span><span style="letter-spacing:-0.073px">User </span><span style="letter-spacing:0.173px">fee </span><span style="letter-spacing:0.071px">- </span><span style="letter-spacing:0.108px">all </span><span style="letter-spacing:-0.271px">users </span><span style="letter-spacing:0.321px">included </span><span style="letter-spacing:0.341px">in </span><span style="letter-spacing:-0.045px">service </span><span style="letter-spacing:0.322px">from </span><span style="letter-spacing:0.189px">partner; </span><span style="letter-spacing:-0.268px">Users </span><span style="letter-spacing:0.471px">with </span><span style="letter-spacing:0.241px">helpdesk</span></span>
<span style="left:1265.19px;top:956px;font-size:16.2px;letter-spacing:-0.102px;">Grant Johns</span>
<span style="left:1432.24px;top:956px;font-size:16.2px;letter-spacing:0.432px;">9/18/2024</span>
<span style="left:1546.77px;top:956px;font-size:16.2px;letter-spacing:0.432px;">1/30/2025</span>
<span style="left:20.37px;top:980px;font-size:16.2px;letter-spacing:-0.087px;">Hamza.Baker@bsuredemo.com</span>
<span style="left:358.48px;top:980px;font-size:16.2px;letter-spacing:0.1px;">345</span>
<span style="left:398.88px;top:980px;font-size:16.2px;"><span style="letter-spacing:0.046px">Citrix </span><span style="letter-spacing:0.263px">Desktop </span><span style="letter-spacing:-0.534px">Access; </span><span style="letter-spacing:0.111px">HubSpot; </span><span style="letter-spacing:0.312px">Adobe </span><span style="letter-spacing:0.058px">pro; </span><span style="letter-spacing:-0.073px">User </span><span style="letter-spacing:0.173px">fee </span><span style="letter-spacing:0.071px">- </span><span style="letter-spacing:0.108px">all </span><span style="letter-spacing:-0.271px">users </span><span style="letter-spacing:0.321px">included </span><span style="letter-spacing:0.341px">in </span><span style="letter-spacing:-0.045px">service </span><span style="letter-spacing:0.322px">from </span><span style="letter-spacing:0.189px">partner; </span><span style="letter-spacing:-0.268px">Users </span><span style="letter-spacing:0.471px">with </span><span style="letter-spacing:0.241px">helpdesk</span></span>
<span style="left:1264.67px;top:980px;font-size:16.2px;letter-spacing:-0.229px;">Hamza Baker</span>
<span style="left:1431.77px;top:980px;font-size:16.2px;letter-spacing:0.432px;">1/20/2021</span>
<span style="left:1546.77px;top:980px;font-size:16.2px;letter-spacing:0.432px;">1/30/2025</span>
<span style="left:20.37px;top:1003px;font-size:16.2px;letter-spacing:0.107px;">Holden.Roberts@bsuredemo.com</span>
<span style="left:358.48px;top:1003px;font-size:16.2px;letter-spacing:0.1px;">345</span>
<span style="left:398.88px;top:1003px;font-size:16.2px;"><span style="letter-spacing:0.046px">Citrix </span><span style="letter-spacing:0.263px">Desktop </span><span style="letter-spacing:-0.534px">Access; </span><span style="letter-spacing:0.111px">HubSpot; </span><span style="letter-spacing:0.312px">Adobe </span><span style="letter-spacing:0.058px">pro; </span><span style="letter-spacing:-0.073px">User </span><span style="letter-spacing:0.173px">fee </span><span style="letter-spacing:0.071px">- </span><span style="letter-spacing:0.108px">all </span><span style="letter-spacing:-0.271px">users </span><span style="letter-spacing:0.321px">included </span><span style="letter-spacing:0.341px">in </span><span style="letter-spacing:-0.045px">service </span><span style="letter-spacing:0.322px">from </span><span style="letter-spacing:0.189px">partner; </span><span style="letter-spacing:-0.268px">Users </span><span style="letter-spacing:0.471px">with </span><span style="letter-spacing:0.241px">helpdesk</span></span>
<span style="left:1264.67px;top:1003px;font-size:16.2px;letter-spacing:0.168px;">Holden Roberts</span>
<span style="left:1432.14px;top:1003px;font-size:16.2px;transform-origin:0 0;transform:scaleX(1.0501);">6/1/2021</span>
<span style="left:1546.77px;top:1003px;font-size:16.2px;letter-spacing:0.36px;">12/10/2024</span>
<span style="left:21.45px;top:1027px;font-size:16.2px;letter-spacing:0.016px;">Jerry.Phillips@bsuredemo.com</span>
<span style="left:358.48px;top:1027px;font-size:16.2px;letter-spacing:0.1px;">345</span>
<span style="left:398.88px;top:1027px;font-size:16.2px;"><span style="letter-spacing:0.046px">Citrix </span><span style="letter-spacing:0.263px">Desktop </span><span style="letter-spacing:-0.534px">Access; </span><span style="letter-spacing:0.111px">HubSpot; </span><span style="letter-spacing:0.312px">Adobe </span><span style="letter-spacing:0.058px">pro; </span><span style="letter-spacing:-0.073px">User </span><span style="letter-spacing:0.173px">fee </span><span style="letter-spacing:0.071px">- </span><span style="letter-spacing:0.108px">all </span><span style="letter-spacing:-0.271px">users </span><span style="letter-spacing:0.321px">included </span><span style="letter-spacing:0.341px">in </span><span style="letter-spacing:-0.045px">service </span><span style="letter-spacing:0.322px">from </span><span style="letter-spacing:0.189px">partner; </span><span style="letter-spacing:-0.268px">Users </span><span style="letter-spacing:0.471px">with </span><span style="letter-spacing:0.241px">helpdesk</span></span>
<span style="left:1265.75px;top:1027px;font-size:16.2px;letter-spacing:-0.007px;">Jerry Phillips</span>
<span style="left:1432.3px;top:1027px;font-size:16.2px;letter-spacing:0.432px;">8/18/2022</span>
<span style="left:1547.63px;top:1027px;font-size:16.2px;letter-spacing:0.432px;">4/10/2024</span>
<span style="left:20.37px;top:1051px;font-size:16.2px;letter-spacing:-0.048px;">Kyson.Romero@bsuredemo.com</span>
<span style="left:358.48px;top:1051px;font-size:16.2px;letter-spacing:0.1px;">345</span>
<span style="left:398.88px;top:1051px;font-size:16.2px;"><span style="letter-spacing:0.046px">Citrix </span><span style="letter-spacing:0.263px">Desktop </span><span style="letter-spacing:-0.534px">Access; </span><span style="letter-spacing:0.111px">HubSpot; </span><span style="letter-spacing:0.312px">Adobe </span><span style="letter-spacing:0.058px">pro; </span><span style="letter-spacing:-0.073px">User </span><span style="letter-spacing:0.173px">fee </span><span style="letter-spacing:0.071px">- </span><span style="letter-spacing:0.108px">all </span><span style="letter-spacing:-0.271px">users </span><span style="letter-spacing:0.321px">included </span><span style="letter-spacing:0.341px">in </span><span style="letter-spacing:-0.045px">service </span><span style="letter-spacing:0.322px">from </span><span style="letter-spacing:0.189px">partner; </span><span style="letter-spacing:-0.268px">Users </span><span style="letter-spacing:0.471px">with </span><span style="letter-spacing:0.241px">helpdesk</span></span>
<span style="left:1264.67px;top:1051px;font-size:16.2px;letter-spacing:-0.163px;">Kyson Romero</span>
<span style="left:1431.77px;top:1051px;font-size:16.2px;letter-spacing:0.432px;">1/21/2020</span>
<span style="left:1546.77px;top:1051px;font-size:16.2px;letter-spacing:0.432px;">1/27/2025</span>
<div style="left:15px;top:1060px;width:1618px;height:26.7px;background:#fff"></div>
<div style="left:313.95px;top:1060px;width:1.3px;height:24.7px;background:rgba(0,0,0,.115)"></div>
<div style="left:391.35px;top:1060px;width:1.3px;height:24.7px;background:rgba(0,0,0,.115)"></div>
<div style="left:1257.65px;top:1060px;width:1.3px;height:24.7px;background:rgba(0,0,0,.115)"></div>
<div style="left:1424.65px;top:1060px;width:1.3px;height:24.7px;background:rgba(0,0,0,.115)"></div>
<div style="left:1539.75px;top:1060px;width:1.3px;height:24.7px;background:rgba(0,0,0,.115)"></div>
<div style="left:15px;top:1060px;width:1618px;height:1.1px;background:#2f8f6e"></div>
<span style="left:21.51px;top:1066px;font-size:16.2px;font-weight:700;transform-origin:0 0;transform:scaleX(1.0321);">Total</span>
<span style="left:327.18px;top:1066px;font-size:16.2px;font-weight:700;transform-origin:100% 0;transform:scaleX(1.0625);">456,515</span>
<div style="left:16px;top:1086.3px;width:343px;height:8.4px;background:#b0aeac;border-radius:4.2px"></div>
<div style="left:1634.6px;top:679.5px;width:7.2px;height:10px;background:#b0b0b0;border-radius:3.6px"></div>
<div style="left:1664px;top:616.2px;width:310px;height:483.79999999999995px;background:#fff;border:1px solid #e3e3e3;border-radius:3px;box-shadow:0 0 2px rgba(0,0,0,.05)"></div>
<span style="left:1672.51px;top:624px;font-size:19.5px;letter-spacing:0.358px;-webkit-text-stroke:0.45px #222;">Column Selector</span>
<span style="left:1672.72px;top:654px;font-size:17.2px;letter-spacing:-0.353px;">Select properties</span>
<div style="left:1665px;top:678px;width:310px;height:2px;background:#6fa38c"></div>
<div style="left:1957px;top:685.6px;width:9.8px;height:133.6px;background:#8a8a8a"></div>
<div style="left:1682.8px;top:692.0px;width:15.1px;height:14.8px;border:1px solid #767676;background:#fff"><div style="left:3.3px;top:3.1px;width:8.8px;height:8.7px;background:#777"></div></div>
<span style="left:1709px;top:693px;font-size:16.2px;letter-spacing:-0.168px;">Select all</span>
<svg style="left:1682.8px;top:723.2px" width="17.2" height="17" viewBox="0 0 17.2 17"><rect x="0" y="0" width="17.1" height="16.8" fill="#252423"/><path d="M2.9 9.9 L6.4 12.9 L14 5.2" fill="none" stroke="#fff" stroke-width="1.3"/></svg>
<span style="left:1709px;top:725px;font-size:16.2px;letter-spacing:-0.108px;">Cost</span>
<svg style="left:1682.8px;top:754.4px" width="17.2" height="17" viewBox="0 0 17.2 17"><rect x="0" y="0" width="17.1" height="16.8" fill="#252423"/><path d="M2.9 9.9 L6.4 12.9 L14 5.2" fill="none" stroke="#fff" stroke-width="1.3"/></svg>
<span style="left:1709px;top:756px;font-size:16.2px;letter-spacing:0.174px;">Group names combined</span>
<div style="left:1682.8px;top:785.6px;width:15.1px;height:14.8px;border:1px solid #767676;background:#fff"></div>
<span style="left:1709px;top:787px;font-size:16.2px;letter-spacing:0.056px;">Group names in rows</span>
<div style="left:1682.8px;top:816.8px;width:15.1px;height:14.8px;border:1px solid #767676;background:#fff"></div>
<span style="left:1709px;top:818px;font-size:16.2px;letter-spacing:0.234px;">Group description in rows</span>
<svg style="left:1682.8px;top:848.0px" width="17.2" height="17" viewBox="0 0 17.2 17"><rect x="0" y="0" width="17.1" height="16.8" fill="#252423"/><path d="M2.9 9.9 L6.4 12.9 L14 5.2" fill="none" stroke="#fff" stroke-width="1.3"/></svg>
<span style="left:1709px;top:849px;font-size:16.2px;letter-spacing:-0.01px;">Display name</span>
<svg style="left:1682.8px;top:879.2px" width="17.2" height="17" viewBox="0 0 17.2 17"><rect x="0" y="0" width="17.1" height="16.8" fill="#252423"/><path d="M2.9 9.9 L6.4 12.9 L14 5.2" fill="none" stroke="#fff" stroke-width="1.3"/></svg>
<span style="left:1709px;top:881px;font-size:16.2px;letter-spacing:0.034px;">Created date</span>
<svg style="left:1682.8px;top:910.4px" width="17.2" height="17" viewBox="0 0 17.2 17"><rect x="0" y="0" width="17.1" height="16.8" fill="#252423"/><path d="M2.9 9.9 L6.4 12.9 L14 5.2" fill="none" stroke="#fff" stroke-width="1.3"/></svg>
<span style="left:1709px;top:912px;font-size:16.2px;letter-spacing:0.111px;">Last sign-in date</span>
<svg style="left:1682.8px;top:941.6px" width="17.2" height="17" viewBox="0 0 17.2 17"><rect x="0" y="0" width="17.1" height="16.8" fill="#252423"/><path d="M2.9 9.9 L6.4 12.9 L14 5.2" fill="none" stroke="#fff" stroke-width="1.3"/></svg>
<span style="left:1709px;top:943px;font-size:16.2px;letter-spacing:0.388px;">Department</span>
<svg style="left:1682.8px;top:972.8px" width="17.2" height="17" viewBox="0 0 17.2 17"><rect x="0" y="0" width="17.1" height="16.8" fill="#252423"/><path d="M2.9 9.9 L6.4 12.9 L14 5.2" fill="none" stroke="#fff" stroke-width="1.3"/></svg>
<span style="left:1709px;top:974px;font-size:16.2px;letter-spacing:0.036px;">Company name</span>
<svg style="left:1682.8px;top:1004.0px" width="17.2" height="17" viewBox="0 0 17.2 17"><rect x="0" y="0" width="17.1" height="16.8" fill="#252423"/><path d="M2.9 9.9 L6.4 12.9 L14 5.2" fill="none" stroke="#fff" stroke-width="1.3"/></svg>
<span style="left:1709px;top:1005px;font-size:16.2px;letter-spacing:0.414px;">Country</span>
<svg style="left:1682.8px;top:1035.2px" width="17.2" height="17" viewBox="0 0 17.2 17"><rect x="0" y="0" width="17.1" height="16.8" fill="#252423"/><path d="M2.9 9.9 L6.4 12.9 L14 5.2" fill="none" stroke="#fff" stroke-width="1.3"/></svg>
<span style="left:1709px;top:1037px;font-size:16.2px;letter-spacing:0.306px;">Office location</span>
<svg style="left:1682.8px;top:1066.4px" width="17.2" height="17" viewBox="0 0 17.2 17"><rect x="0" y="0" width="17.1" height="16.8" fill="#252423"/><path d="M2.9 9.9 L6.4 12.9 L14 5.2" fill="none" stroke="#fff" stroke-width="1.3"/></svg>
<span style="left:1709px;top:1068px;font-size:16.2px;letter-spacing:0.162px;">Manager name</span>
</body></html>
